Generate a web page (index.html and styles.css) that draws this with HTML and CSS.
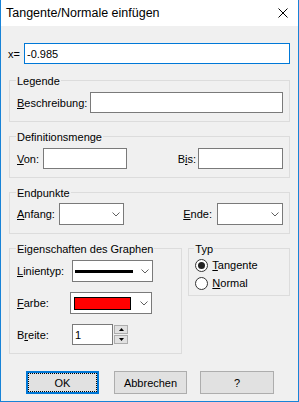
FILE: index.html
```html
<!DOCTYPE html>
<html lang="de">
<head>
  <meta charset="UTF-8">
  <title>Tangente/Normale einfügen</title>
  <link rel="stylesheet" href="styles.css">
</head>
<body>
  <div class="window">
    <div class="titlebar">
      <span class="title">Tangente/Normale einfügen</span>
      <svg class="close" width="10" height="10" viewBox="0 0 10 10">
        <path d="M0.5 0.5 L9.5 9.5 M9.5 0.5 L0.5 9.5" stroke="#000" stroke-width="1" fill="none"/>
      </svg>
    </div>

    <div class="content">
      <div class="xrow">
        <span class="xlabel">x=</span>
        <div class="field field-x focused">-0.985</div>
      </div>

      <div class="group group-first">
        <div class="group-title">Legende</div>
        <div class="row">
          <span><u>B</u>eschreibung:</span>
          <div class="field field-desc"></div>
        </div>
      </div>

      <div class="group">
        <div class="group-title">Definitionsmenge</div>
        <div class="row">
          <span class="label-von"><u>V</u>on:</span>
          <div class="field field-von"></div>
          <span class="push">B<u>i</u>s:</span>
          <div class="field field-bis"></div>
        </div>
      </div>

      <div class="group">
        <div class="group-title">Endpunkte</div>
        <div class="row row-combo">
          <span class="label-anfang"><u>A</u>nfang:</span>
          <div class="combo combo-anfang">
            <span></span>
            <svg class="chevron" width="8" height="5" viewBox="0 0 8 5"><path d="M0.5 0.5 L4 4 L7.5 0.5" stroke="#606060" fill="none"/></svg>
          </div>
          <span class="push"><u>E</u>nde:</span>
          <div class="combo combo-ende">
            <span></span>
            <svg class="chevron" width="8" height="5" viewBox="0 0 8 5"><path d="M0.5 0.5 L4 4 L7.5 0.5" stroke="#606060" fill="none"/></svg>
          </div>
        </div>
      </div>

      <div class="split">
        <div class="group group-graph">
          <div class="group-title">Eigenschaften des Graphen</div>
          <div class="row row-graph">
            <span class="label-graph"><u>L</u>inientyp:</span>
            <div class="combo combo-line">
              <span class="line-sample"></span>
              <svg class="chevron" width="8" height="5" viewBox="0 0 8 5"><path d="M0.5 0.5 L4 4 L7.5 0.5" stroke="#606060" fill="none"/></svg>
            </div>
          </div>
          <div class="row row-graph row-gap">
            <span class="label-farbe"><u>F</u>arbe:</span>
            <div class="combo combo-color">
              <span class="swatch"></span>
              <svg class="chevron" width="8" height="5" viewBox="0 0 8 5"><path d="M0.5 0.5 L4 4 L7.5 0.5" stroke="#606060" fill="none"/></svg>
            </div>
          </div>
          <div class="row row-graph row-gap">
            <span class="label-graph">B<u>r</u>eite:</span>
            <div class="field field-width">1</div>
            <div class="spin">
              <div class="spin-btn"><svg width="5" height="3" viewBox="0 0 5 3"><path d="M0 3 L2.5 0 L5 3 Z" fill="#000"/></svg></div>
              <div class="spin-btn"><svg width="5" height="3" viewBox="0 0 5 3"><path d="M0 0 L2.5 3 L5 0 Z" fill="#000"/></svg></div>
            </div>
          </div>
        </div>

        <div class="group group-typ">
          <div class="group-title">Typ</div>
          <div class="radio-row">
            <span class="radio checked"></span>
            <span><u>T</u>angente</span>
          </div>
          <div class="radio-row">
            <span class="radio"></span>
            <span><u>N</u>ormal</span>
          </div>
        </div>
      </div>

      <div class="buttons">
        <div class="button button-ok">OK</div>
        <div class="button button-cancel">Abbrechen</div>
        <div class="button button-help">?</div>
      </div>
    </div>
  </div>
</body>
</html>
```

FILE: styles.css
```css
body {
  margin: 0;
  background: #fff;
}

.window {
  width: 297px;
  height: 401px;
  border: 1px solid #1883d7;
  border-top: 0;
  background: #f0f0f0;
  font-family: "Liberation Sans", Arial, sans-serif;
  font-size: 11px;
  color: #000;
}

.titlebar {
  height: 26px;
  background: #fff;
  display: flex;
  align-items: center;
  justify-content: space-between;
  padding: 0 10px 0 5px;
}

.title {
  font-family: "Liberation Sans", Arial, sans-serif;
  font-size: 12.5px;
}

.content {
  padding: 17px 8px 0 8px;
}

u {
  text-decoration: underline;
  text-underline-offset: 1px;
}

.xrow {
  display: flex;
  align-items: center;
}

.xlabel {
  width: 16px;
  margin-left: -1px;
}

.field {
  box-sizing: border-box;
  height: 21px;
  border: 1px solid #7a7a7a;
  background: #fff;
  padding-left: 2px;
  display: flex;
  align-items: center;
}

.field.focused {
  border-color: #0078d7;
}

.field-x {
  flex: 1;
}

.group {
  border: 1px solid #dcdcdc;
  padding: 0 6px 8px 7px;
  margin-top: 14px;
}

.group-first {
  margin-top: 16px;
}

.group-title {
  width: fit-content;
  margin: -6px 0 0 -1px;
  padding: 0 1px;
  line-height: 13px;
  background: #f0f0f0;
}

.row {
  display: flex;
  align-items: center;
  margin-top: 4px;
}

.row-combo {
  margin-top: 3px;
}

.push {
  margin-left: auto;
}

.field-desc {
  width: 193px;
  margin-left: auto;
}

.label-von {
  width: 26px;
}

.field-von {
  width: 84px;
}

.field-bis {
  width: 85px;
  margin-left: 2px;
}

.combo {
  box-sizing: border-box;
  height: 22px;
  border: 1px solid #7a7a7a;
  background: #fff;
  display: flex;
  align-items: center;
  justify-content: space-between;
  padding: 0 3px 0 3px;
}

.label-anfang {
  width: 42px;
}

.combo-anfang {
  width: 65px;
}

.combo-ende {
  width: 66px;
  margin-left: 5px;
}

.split {
  display: flex;
  align-items: flex-start;
  gap: 6px;
  margin-top: 14px;
}

.split .group {
  margin-top: 0;
  box-sizing: border-box;
}

.group-graph {
  width: 174px;
}

.row-gap {
  margin-top: 10px;
}

.label-graph {
  width: 55px;
}

.label-farbe {
  width: 53px;
}

.combo-line {
  width: 81px;
  padding-left: 2px;
}

.line-sample {
  width: 58px;
  height: 3px;
  background: #000;
}

.combo-color {
  width: 82px;
  padding-left: 3px;
}

.swatch {
  box-sizing: border-box;
  width: 57px;
  height: 13px;
  background: #ff0000;
  border: 1px solid #000;
}

.field-width {
  width: 41px;
}

.spin {
  display: flex;
  flex-direction: column;
  gap: 1px;
  margin-left: 1px;
}

.spin-btn {
  box-sizing: border-box;
  width: 14px;
  height: 9px;
  background: #e1e1e1;
  border: 1px solid #adadad;
  display: flex;
  align-items: center;
  justify-content: center;
}

.group-typ {
  width: 102px;
  padding: 0 4px 3px 6px;
}

.radio-row {
  display: flex;
  align-items: center;
  gap: 4px;
  height: 18px;
}

.radio-row:first-of-type {
  margin-top: 2px;
}

.radio {
  box-sizing: border-box;
  width: 13px;
  height: 13px;
  border: 1px solid #333;
  border-radius: 50%;
  background: #fff;
  display: flex;
  align-items: center;
  justify-content: center;
}

.radio.checked::after {
  content: "";
  width: 7px;
  height: 7px;
  border-radius: 50%;
  background: #222;
}

.buttons {
  display: flex;
  margin-top: 17px;
}

.button {
  box-sizing: border-box;
  width: 73px;
  height: 23px;
  background: #e1e1e1;
  border: 1px solid #adadad;
  display: flex;
  align-items: center;
  justify-content: center;
}

.button-ok {
  margin-left: 17px;
  border: 2px solid #0078d7;
  outline: 1px dotted #000;
  outline-offset: -3px;
}

.button-cancel {
  margin-left: 15px;
}

.button-help {
  width: 74px;
  margin-left: 13px;
}
```
